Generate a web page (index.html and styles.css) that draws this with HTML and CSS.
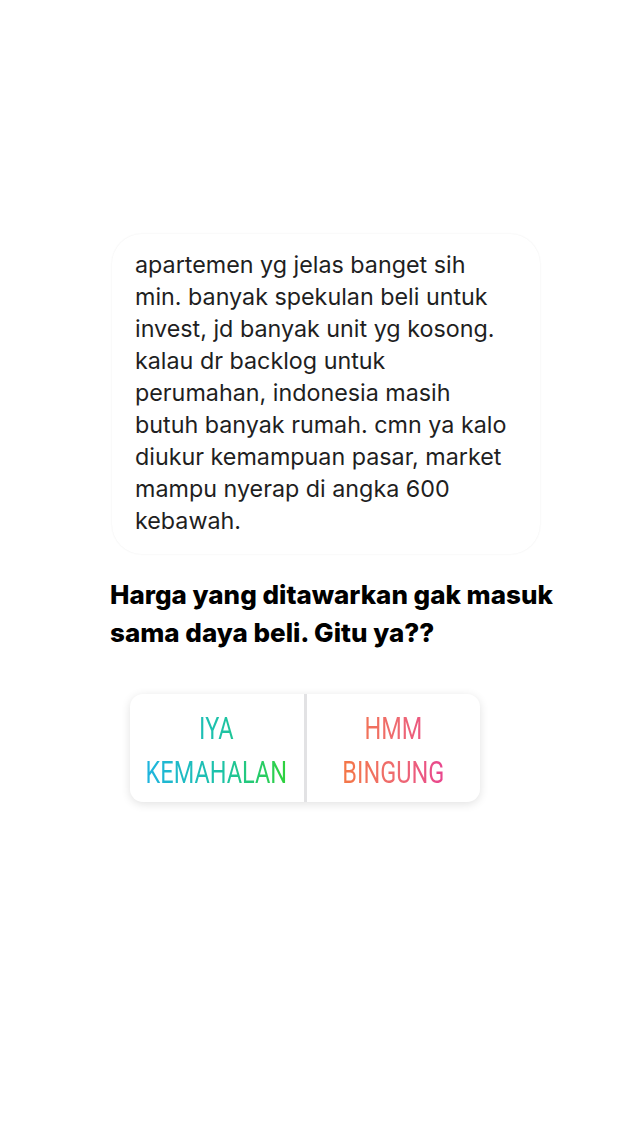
FILE: index.html
```html
<!DOCTYPE html>
<html>
<head>
<meta charset="utf-8">
<link rel="stylesheet" href="styles.css">
</head>
<body>
<main class="page">
  <section class="card">
    <p class="card-text">apartemen yg jelas banget sih<br>min. banyak spekulan beli untuk<br>invest, jd banyak unit yg kosong.<br>kalau dr backlog untuk<br>perumahan, indonesia masih<br>butuh banyak rumah. cmn ya kalo<br>diukur kemampuan pasar, market<br>mampu nyerap di angka 600<br>kebawah.</p>
  </section>
  <h1 class="question">Harga yang ditawarkan gak masuk<br>sama daya beli. Gitu ya??</h1>
  <div class="poll">
    <div class="option"><span class="label label-yes">IYA<br>KEMAHALAN</span></div>
    <div class="divider"></div>
    <div class="option"><span class="label label-no">HMM<br>BINGUNG</span></div>
  </div>
</main>
</body>
</html>
```
FILE: styles.css
```css
html, body {
  margin: 0;
  padding: 0;
  background: #ffffff;
}
.page {
  width: 640px;
  height: 1137px;
  padding: 234px 0 0 110px;
  box-sizing: border-box;
  font-family: "Inter", "Liberation Sans", Arial, sans-serif;
}
.card {
  margin-left: 2px;
  width: 428px;
  height: 320px;
  box-sizing: border-box;
  border-radius: 30px;
  background: #ffffff;
  box-shadow: 0 0 2px rgba(0,0,0,0.08);
  padding: 15px 0 0 23px;
}
.card-text {
  margin: 0;
  font-family: "Inter", "Liberation Sans", Arial, sans-serif;
  font-size: 23.3px;
  line-height: 32px;
  color: #1f1f1f;
}
.question {
  margin: 22px 0 0 0;
  font-family: "Inter", "Liberation Sans", Arial, sans-serif;
  font-weight: 800;
  font-size: 26px;
  line-height: 38px;
  color: #000;
  letter-spacing: 0;
}
.poll {
  margin: 42px 0 0 20px;
  width: 350px;
  height: 108px;
  border-radius: 13px;
  background: #fff;
  box-shadow: 0 2px 10px rgba(0,0,0,0.12);
  display: flex;
  align-items: stretch;
}
.option {
  flex: 1 1 0;
  min-width: 0;
  display: flex;
  align-items: center;
  justify-content: center;
}
.divider {
  width: 3px;
  background: #e2e2e4;
}
.label {
  display: inline-block;
  font-family: "Roboto", sans-serif;
  font-size: 32px;
  line-height: 44px;
  text-align: center;
  transform: scaleX(0.735);
  -webkit-background-clip: text;
  background-clip: text;
  color: transparent;
  margin-top: 4px;
  white-space: nowrap;
}
.label-yes {
  background-image: linear-gradient(90deg, #1fb4e0 0%, #1dc3a5 55%, #2fd23a 100%);
}
.label-no {
  background-image: linear-gradient(90deg, #f47746 0%, #ee6a72 55%, #e8458f 100%);
}
```
